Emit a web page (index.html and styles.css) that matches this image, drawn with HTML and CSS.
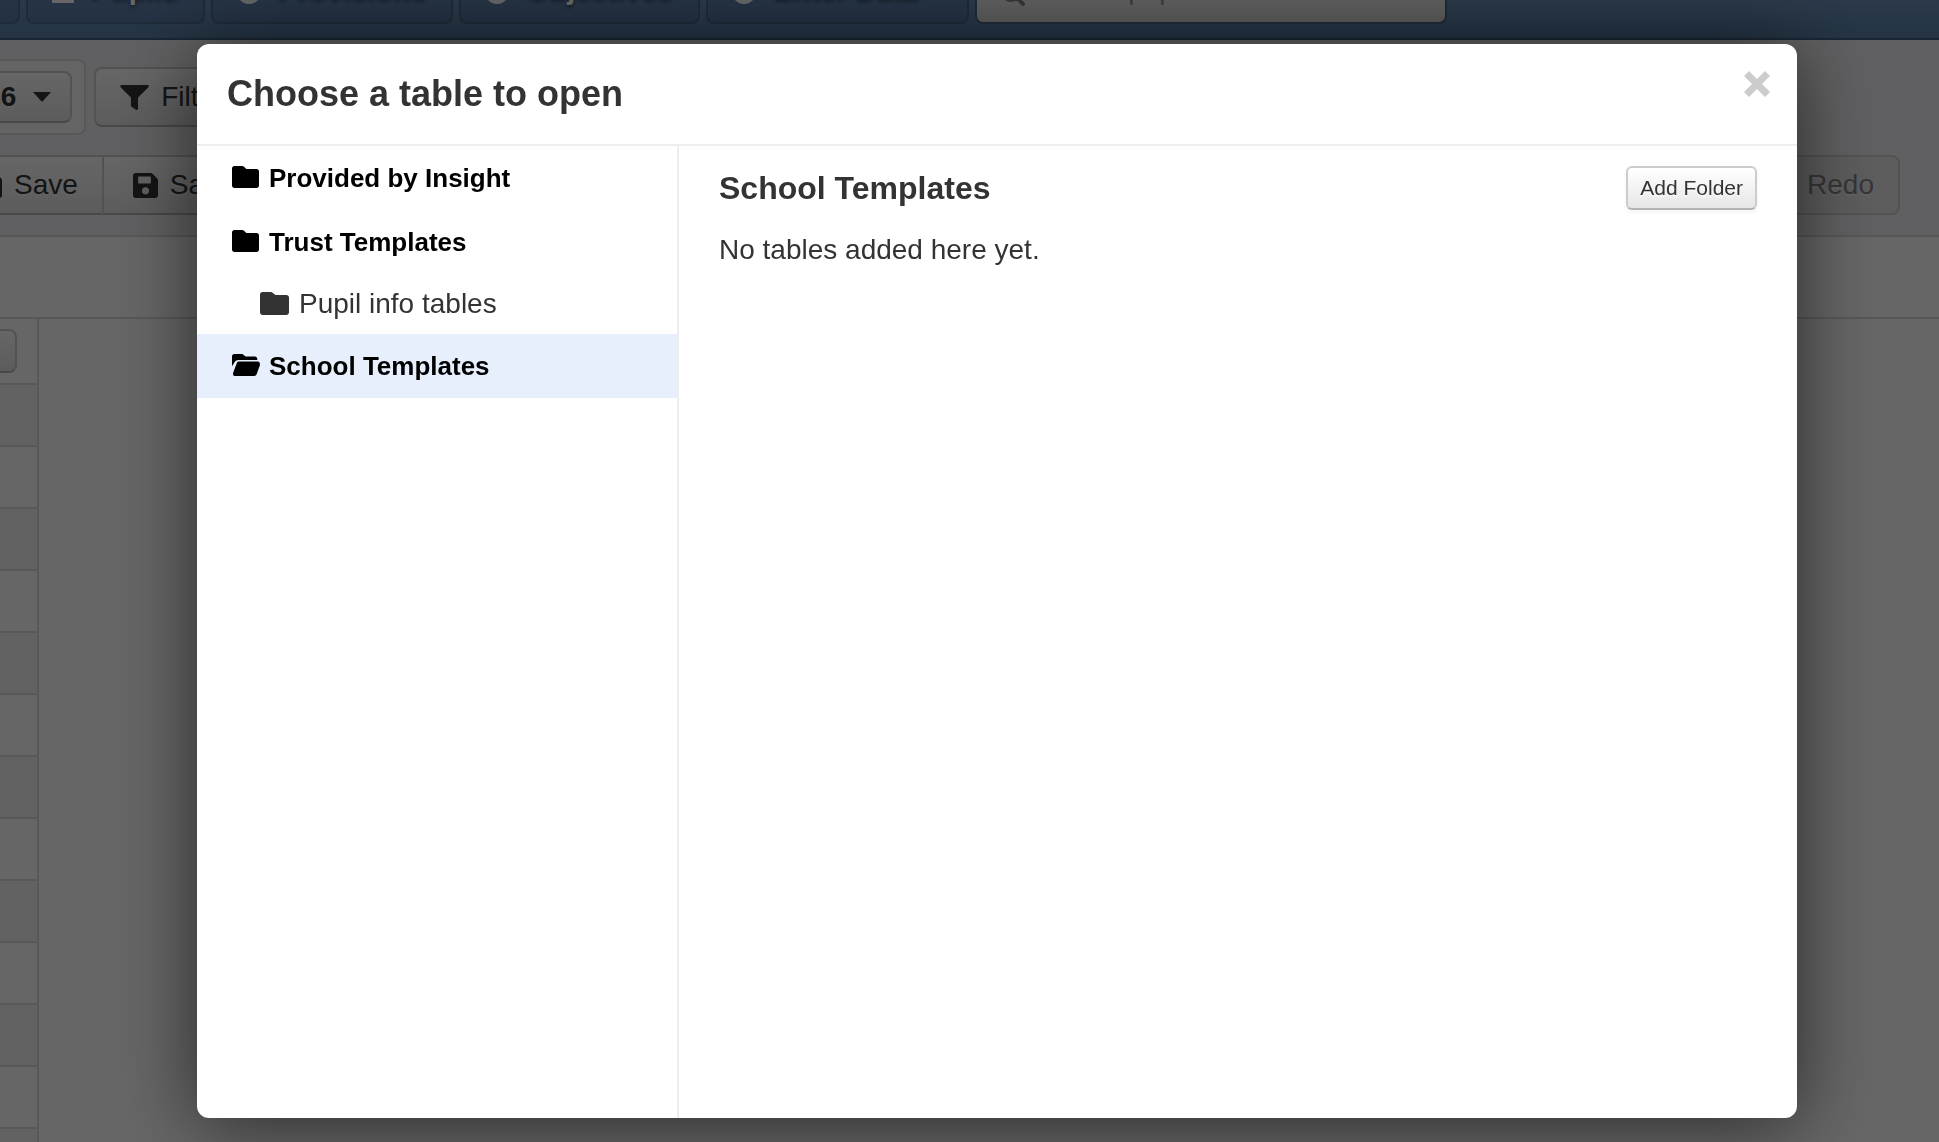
FILE: index.html
```html
<!DOCTYPE html>
<html lang="en">
<head>
<meta charset="utf-8">
<meta name="viewport" content="width=device-width, initial-scale=1">
<title>Choose a table to open</title>
<link rel="stylesheet" href="styles.css">
</head>
<body>
<svg class="sprite" aria-hidden="true">
  <symbol id="folder" viewBox="0 0 512 416" preserveAspectRatio="none"><path d="M464 56H272l-44-40C218 6 206 0 190 0H48C20 0 0 20 0 48v320c0 28 20 48 48 48h416c28 0 48-20 48-48V104c0-28-20-48-48-48z"/></symbol>
  <symbol id="folder-open" viewBox="0 0 576 448" preserveAspectRatio="none"><path d="M0 250V48C0 20 20 0 48 0h150c19 0 31 10 40 18l44 34h190c27 0 48 21 48 48v20H130c-30 0-56 14-72 40zM104 174L22 388c-4 40 6 60 34 60h400c24 0 40-12 50-34l66-180c12-42-8-82-41-82H145c-17 0-33 6-41 22z"/></symbol>
  <symbol id="disk" viewBox="0 0 448 448"><path fill-rule="evenodd" d="M434 98L350 14c-9-9-21-14-34-14H48C21 0 0 21 0 48v352c0 27 21 48 48 48h352c27 0 48-21 48-48V132c0-13-5-25-14-34zM224 384a64 64 0 1 1 0-128 64 64 0 0 1 0 128zM320 78v100c0 7-5 12-12 12H104c-7 0-12-5-12-12V76c0-7 5-12 12-12h200c10 0 16 6 16 14z"/></symbol>
  <symbol id="funnel" viewBox="0 0 512 448"><path d="M488 0H24C3 0-8 26 7 41l185 185v142c0 8 4 15 10 20l80 54c16 11 38 0 38-20V226L505 41c15-15 4-41-17-41z"/></symbol>
  <symbol id="person" viewBox="0 0 24 24"><path d="M6 0h12v10l6 4v10H0V14l6-4z"/></symbol>
  <symbol id="disc" viewBox="0 0 24 24"><circle cx="12" cy="12" r="12"/></symbol>
  <symbol id="search" viewBox="0 0 24 24"><path fill="none" stroke="currentColor" stroke-width="4" stroke-linecap="round" d="M15 15l7 7M18 10a8 8 0 1 1-16 0 8 8 0 0 1 16 0z"/></symbol>
  <symbol id="cross" viewBox="0 0 26 26"><path d="M5 0l8 8 8-8 5 5-8 8 8 8-5 5-8-8-8 8-5-5 8-8-8-8z"/></symbol>
</svg>

<div class="page">
  <header class="navbar">
    <nav class="navbar-items" aria-label="Main">
      <a class="nav-item" href="#">Home</a>
      <a class="nav-item" href="#"><svg class="nav-icon nav-icon-person"><use href="#person"/></svg>Pupils</a>
      <a class="nav-item" href="#"><svg class="nav-icon"><use href="#disc"/></svg>Provisions</a>
      <a class="nav-item" href="#"><svg class="nav-icon"><use href="#disc"/></svg>Objectives</a>
      <a class="nav-item nav-item-menu" href="#"><svg class="nav-icon"><use href="#disc"/></svg>Enter Data</a>
      <label class="search">
        <svg class="search-icon"><use href="#search"/></svg>
        <input type="text" placeholder="Find a pupil" aria-label="Find a pupil">
      </label>
    </nav>
  </header>

  <div class="toolbar">
    <div class="toolbar-row toolbar-filters">
      <div class="well"><button class="btn btn-year" type="button">2025/26<span class="caret"></span></button></div>
      <button class="btn btn-tall" type="button"><svg class="icon-funnel"><use href="#funnel"/></svg>Filter</button>
    </div>
    <div class="toolbar-row toolbar-actions">
      <div class="btn-group">
        <button class="btn btn-tall" type="button"><svg class="icon-disk"><use href="#disk"/></svg>Save</button>
        <button class="btn btn-tall" type="button"><svg class="icon-disk"><use href="#disk"/></svg>Save As</button>
      </div>
      <button class="btn btn-tall" type="button" disabled>Redo</button>
    </div>
  </div>

  <div class="title-strip"></div>

  <table class="grid" aria-label="Pupils">
    <thead><tr><th><button class="btn btn-cell" type="button" aria-label="Column options"></button></th></tr></thead>
    <tbody>
      <tr><td></td></tr><tr><td></td></tr><tr><td></td></tr><tr><td></td></tr><tr><td></td></tr>
      <tr><td></td></tr><tr><td></td></tr><tr><td></td></tr><tr><td></td></tr><tr><td></td></tr>
      <tr><td></td></tr><tr><td></td></tr><tr><td></td></tr>
    </tbody>
  </table>
</div>

<div class="backdrop">
  <section class="modal" role="dialog" aria-modal="true" aria-labelledby="modal-title">
    <header class="modal-header">
      <h1 id="modal-title">Choose a table to open</h1>
      <button class="close" type="button" aria-label="Close"><svg><use href="#cross"/></svg></button>
    </header>
    <div class="modal-body">
      <nav class="folders" aria-label="Folders">
        <a class="folder" href="#"><svg class="icon-folder"><use href="#folder"/></svg>Provided by Insight</a>
        <a class="folder" href="#"><svg class="icon-folder"><use href="#folder"/></svg>Trust Templates</a>
        <a class="folder folder-child" href="#"><svg class="icon-folder"><use href="#folder"/></svg>Pupil info tables</a>
        <a class="folder folder-active" href="#" aria-current="true"><svg class="icon-folder"><use href="#folder-open"/></svg>School Templates</a>
      </nav>
      <div class="content">
        <div class="content-header">
          <h2>School Templates</h2>
          <button class="btn btn-small" type="button">Add Folder</button>
        </div>
        <p>No tables added here yet.</p>
      </div>
    </div>
  </section>
</div>
</body>
</html>
```
FILE: styles.css
```css
* { box-sizing: border-box; }

body {
  margin: 0;
  color: #333;
  font: 28px/40px "Liberation Sans", Arial, sans-serif;
}

h1, h2, p { margin: 0; }
a { color: inherit; text-decoration: none; }
svg { flex: none; fill: currentColor; }
.sprite { display: none; }

.page {
  height: 100vh;
  overflow: hidden;
  background: #fff;
}

/* Top navigation */
.navbar {
  display: flex;
  align-items: flex-end;
  height: 40px;
  padding-bottom: 14px;
  overflow: hidden;
  background: linear-gradient(#6b8fb8, #5a82a8);
  border-bottom: 2px solid #3f5f80;
}

.navbar-items {
  display: flex;
  flex: none;
  gap: 6px;
  margin-left: -113px;
}

.nav-item {
  display: flex;
  align-items: flex-end;
  gap: 18px;
  height: 68px;
  padding: 0 24px 18px;
  border: 2px solid #4b6b8c;
  border-radius: 8px;
  background: linear-gradient(#6b8fb8, #5a7ba5);
  color: #fff;
  font-size: 29px;
  font-weight: bold;
  line-height: 30px;
  text-shadow: 0 2px 4px rgba(0, 0, 0, .6);
}

.nav-item-menu { padding-right: 48px; }
.nav-icon { width: 24px; height: 24px; }
.nav-icon-person { width: 22px; }

.search {
  display: flex;
  align-items: flex-end;
  gap: 18px;
  width: 472px;
  height: 68px;
  padding: 0 24px 16px;
  border: 2px solid #4b6b8c;
  border-radius: 8px;
  background: linear-gradient(#fff, #e4e4e4);
}

.search-icon { width: 24px; height: 24px; color: #888; }

.search input {
  flex: 1;
  min-width: 0;
  height: 32px;
  padding: 0;
  border: 0;
  background: none;
  font: inherit;
  line-height: 32px;
}

.search input::placeholder { color: #999; }

/* Toolbar */
.toolbar {
  display: flex;
  flex-direction: column;
  gap: 20px;
  padding: 19px 0 20px;
  overflow: hidden;
  background: #f0f0f4;
  border-bottom: 2px solid #d8d8d8;
}

.toolbar-row { display: flex; align-items: center; gap: 8px; }
.toolbar-filters { margin-left: -120px; }

.toolbar-actions {
  justify-content: space-between;
  margin-left: -49px;
  padding-right: 39px;
}

.well {
  padding: 10px 12px;
  border: 2px solid #ddd;
  border-radius: 8px;
  background: #fafafa;
}

.btn {
  display: flex;
  align-items: center;
  gap: 12px;
  padding: 0 24px;
  border: 2px solid #ccc;
  border-bottom-color: #b3b3b3;
  border-radius: 8px;
  background: linear-gradient(#fff, #e6e6e6);
  color: #333;
  font: inherit;
  text-shadow: 0 2px 2px rgba(255, 255, 255, .75);
}

.btn:disabled {
  background: #e8e8e8;
  border-color: #d0d0d0;
  color: #888;
}

.btn-year {
  gap: 17px;
  height: 52px;
  padding: 0 19px;
  font-weight: bold;
}

.btn-tall { height: 60px; }

.caret {
  border: solid transparent;
  border-width: 10px 9px 0;
  border-top-color: #333;
}

.icon-funnel { width: 29px; height: 25px; }
.icon-disk { width: 25px; height: 25px; }

.btn-group { display: flex; }
.btn-group .btn:first-child { border-right: 0; border-radius: 8px 0 0 8px; }
.btn-group .btn:last-child { padding-left: 29px; border-radius: 0 8px 8px 0; }

.title-strip { height: 82px; border-bottom: 2px solid #dcdcdc; }

/* Data grid */
.grid { width: 39px; border-collapse: separate; border-spacing: 0; }

.grid th, .grid td {
  height: 62px;
  padding: 0;
  border: solid #dcdcdc;
  border-width: 0 2px 2px 0;
}

.grid th { height: 66px; }
.grid tbody tr:nth-child(odd) { background: #f6f6f6; }

.btn-cell {
  width: 44px;
  height: 44px;
  margin-left: -27px;
  padding: 0;
}

/* Modal */
.backdrop {
  position: fixed;
  inset: 0;
  display: flex;
  padding: 44px 142px 24px 197px;
  background: rgba(0, 0, 0, .6);
}

.modal {
  display: flex;
  flex: 1;
  flex-direction: column;
  overflow: hidden;
  border-radius: 12px;
  background: #fff;
  box-shadow: 0 6px 80px rgba(0, 0, 0, .6);
}

.modal-header {
  display: flex;
  align-items: flex-start;
  justify-content: space-between;
  padding: 25px 27px 25px 30px;
  border-bottom: 2px solid #eee;
}

h1 { font-size: 36px; line-height: 50px; }

.close {
  padding: 2px 0 0;
  border: 0;
  background: none;
  color: #ccc;
}

.close svg { display: block; width: 26px; height: 26px; }

.modal-body { display: flex; flex: 1; }

.folders {
  width: 30%;
  flex: none;
  box-sizing: content-box;
  border-right: 2px solid #eee;
}

.folder {
  display: flex;
  align-items: center;
  gap: 10px;
  height: 64px;
  padding-left: 35px;
  color: #000;
  font-size: 26px;
  font-weight: bold;
}

.icon-folder { width: 27px; height: 22px; margin-bottom: 2px; }
.folder-active .icon-folder { width: 28px; }
.folder-active { gap: 9px; background: #e8effc; }

.folder-child {
  height: 60px;
  padding-left: 63px;
  color: #333;
  font-size: 28px;
  font-weight: normal;
}

.folder-child .icon-folder { width: 29px; height: 23px; }

.content { flex: 1; padding: 20px 40px; }

.content-header {
  display: flex;
  align-items: center;
  justify-content: space-between;
  margin-bottom: 20px;
}

h2 { font-size: 32px; line-height: 44px; }

.btn-small {
  height: 44px;
  padding: 0 12px;
  border-radius: 6px;
  box-shadow: 0 2px 4px rgba(0, 0, 0, .05);
  font-size: 21px;
}
```
